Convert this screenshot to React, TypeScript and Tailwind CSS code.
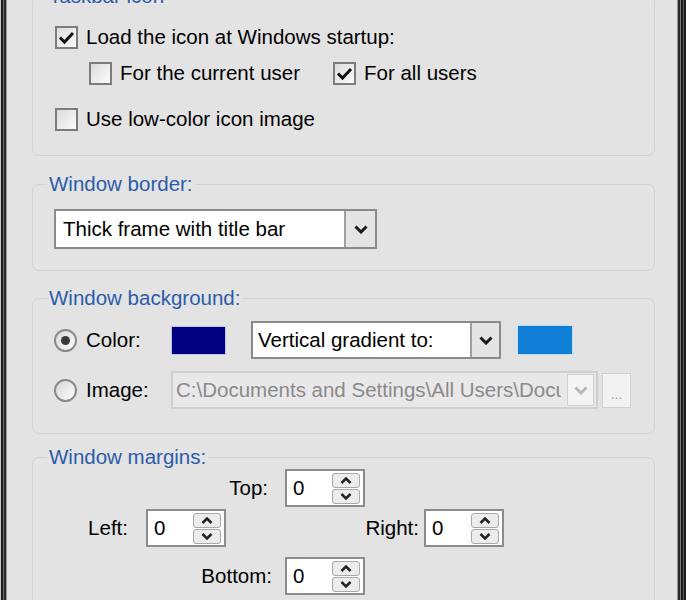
import React from 'react';

function CheckBox({ checked }: { checked?: boolean }) {
    return (
        <span className="w-[23px] h-[23px] shrink-0 border-[2px] border-[#7c7c7c] bg-gradient-to-br from-[#dcdcdc] to-[#fbfbfb] flex items-center justify-center">
            {checked && (
                <svg width="17" height="15" viewBox="0 0 17 15">
                    <path d="M2 7.5 L6.5 12 L15 3" fill="none" stroke="#111" strokeWidth="3" />
                </svg>
            )}
        </span>
    );
}

function Radio({ checked }: { checked?: boolean }) {
    return (
        <span className="w-[23px] h-[23px] shrink-0 rounded-full border-[2px] border-[#8a8a8a] bg-gradient-to-br from-[#d6d6d6] to-[#ffffff] flex items-center justify-center">
            {checked && <span className="w-[9px] h-[9px] rounded-full bg-[#3a3a3a]" />}
        </span>
    );
}

function Chevron({ color = '#1a1a1a' }: { color?: string }) {
    return (
        <svg width="14" height="9" viewBox="0 0 14 9">
            <path d="M1.5 1.5 L7 7 L12.5 1.5" fill="none" stroke={color} strokeWidth="3" />
        </svg>
    );
}

function Group({ title, className, children }: { title: string; className?: string; children: React.ReactNode }) {
    return (
        <fieldset className={`border border-[#d2d2d2] rounded-[7px] ${className ?? ''}`}>
            <legend className="ml-[14px] px-[2px] h-[24px] leading-[24px] text-[#2b5cab]">{title}</legend>
            {children}
        </fieldset>
    );
}

function Spin() {
    return (
        <div className="w-[80px] h-[38px] border-[2px] border-[#8c8c8c] bg-white flex items-center justify-between pl-[6px] pr-[3px]">
            <span>0</span>
            <div className="flex flex-col gap-[1px]">
                <span className="w-[28px] h-[15px] rounded-[3px] border border-[#a8a8a8] bg-[#ececec] flex items-center justify-center">
                    <svg width="12" height="7" viewBox="0 0 12 7"><path d="M1.5 6 L6 1.5 L10.5 6" fill="none" stroke="#222" strokeWidth="2.5" /></svg>
                </span>
                <span className="w-[28px] h-[15px] rounded-[3px] border border-[#a8a8a8] bg-[#ececec] flex items-center justify-center">
                    <svg width="12" height="7" viewBox="0 0 12 7"><path d="M1.5 1 L6 5.5 L10.5 1" fill="none" stroke="#222" strokeWidth="2.5" /></svg>
                </span>
            </div>
        </div>
    );
}

export default function App() {
    return (
        <div className="w-[686px] h-[600px] overflow-hidden flex bg-[#e3e3e3] text-[20.5px] leading-[24px] text-black font-['Liberation_Sans',Arial,sans-serif]">
            {/* left frame */}
            <div className="flex shrink-0">
                <div className="w-[1px] bg-[#c6c6c6]" />
                <div className="w-[2px] bg-[#1e1e1e]" />
                <div className="w-[1px] bg-[#6c6c6c]" />
                <div className="w-[2px] bg-[#2a2a2a]" />
                <div className="w-[1px] bg-[#9a9a9a]" />
            </div>

            <div className="flex-1 ml-[25px] mr-[22px] mt-[-16px]">
                {/* TASKBAR ICON */}
                <Group title="Taskbar icon">
                    <div className="pl-[22px] pt-[17px] pb-[24px]">
                        <div className="h-[24px] flex items-center gap-[8px]">
                            <CheckBox checked />
                            <span>Load the icon at Windows startup:</span>
                        </div>
                        <div className="h-[24px] mt-[12px] ml-[34px] flex items-center">
                            <CheckBox />
                            <span className="ml-[8px] w-[213px]">For the current user</span>
                            <CheckBox checked />
                            <span className="ml-[8px]">For all users</span>
                        </div>
                        <div className="h-[24px] mt-[22px] flex items-center gap-[8px]">
                            <CheckBox />
                            <span>Use low-color icon image</span>
                        </div>
                    </div>
                </Group>

                {/* WINDOW BORDER */}
                <Group title="Window border:" className="mt-[16px]">
                    <div className="pl-[21px] pt-[13px] pb-[21px]">
                        <div className="w-[323px] h-[40px] border-[2px] border-[#8a8a8a] bg-white flex items-center justify-between">
                            <span className="pl-[7px]">Thick frame with title bar</span>
                            <span className="w-[31px] h-full border-l-[2px] border-[#a0a0a0] bg-[#e4e4e4] flex items-center justify-center">
                                <Chevron />
                            </span>
                        </div>
                    </div>
                </Group>

                {/* WINDOW BACKGROUND */}
                <Group title="Window background:" className="mt-[15px]">
                    <div className="pl-[21px] pt-[11px] pb-[24px]">
                        <div className="h-[38px] flex items-center">
                            <div className="w-[117px] flex items-center gap-[9px]">
                                <Radio checked />
                                <span>Color:</span>
                            </div>
                            <span className="w-[55px] h-[29px] bg-[#000080] border border-[#b8c4e8]" />
                            <div className="ml-[25px] w-[250px] h-[38px] border-[2px] border-[#8a8a8a] bg-white flex items-center justify-between">
                                <span className="pl-[5px]">Vertical gradient to:</span>
                                <span className="w-[29px] h-full border-l-[2px] border-[#a0a0a0] bg-[#e4e4e4] flex items-center justify-center">
                                    <Chevron />
                                </span>
                            </div>
                            <span className="ml-[16px] w-[56px] h-[30px] bg-[#0e7fd4] border border-[#bfe0f8]" />
                        </div>
                        <div className="h-[38px] mt-[12px] flex items-center">
                            <div className="w-[117px] flex items-center gap-[9px]">
                                <Radio />
                                <span>Image:</span>
                            </div>
                            <div className="w-[427px] h-[38px] border-[2px] border-[#cfcfcf] bg-[#e8e8e8] flex items-center justify-between overflow-hidden">
                                <span className="pl-[3px] text-[#8a8a8a] whitespace-nowrap overflow-hidden w-[388px]">C:\Documents and Settings\All Users\Documents</span>
                                <span className="w-[27px] h-[32px] mr-[2px] border border-[#d0d0d0] bg-[#f4f4f4] flex items-center justify-center">
                                    <Chevron color="#b8b8b8" />
                                </span>
                            </div>
                            <span className="ml-[4px] w-[29px] h-[35px] border border-[#cfcfcf] bg-[#f2f2f2] flex items-end justify-center pb-[6px] text-[14px] leading-[14px] text-[#a0a0a0]">...</span>
                        </div>
                    </div>
                </Group>

                {/* WINDOW MARGINS */}
                <Group title="Window margins:" className="mt-[11px]">
                    <div className="pb-[20px]">
                        <div className="flex items-center">
                            <span className="w-[235px] text-right">Top:</span>
                            <div className="ml-[17px]"><Spin /></div>
                        </div>
                        <div className="mt-[2px] flex items-center">
                            <span className="w-[95px] text-right">Left:</span>
                            <div className="ml-[18px]"><Spin /></div>
                            <span className="w-[193px] text-right">Right:</span>
                            <div className="ml-[5px]"><Spin /></div>
                        </div>
                        <div className="mt-[10px] flex items-center">
                            <span className="w-[239px] text-right">Bottom:</span>
                            <div className="ml-[13px]"><Spin /></div>
                        </div>
                    </div>
                </Group>
            </div>

            {/* right frame */}
            <div className="flex shrink-0">
                <div className="w-[1px] bg-[#9a9a9a]" />
                <div className="w-[2px] bg-[#2a2a2a]" />
                <div className="w-[1px] bg-[#7a7a7a]" />
                <div className="w-[2px] bg-[#1e1e1e]" />
                <div className="w-[1px] bg-[#5a5a5a]" />
                <div className="w-[2px] bg-[#1a1a1a]" />
            </div>
        </div>
    );
}
